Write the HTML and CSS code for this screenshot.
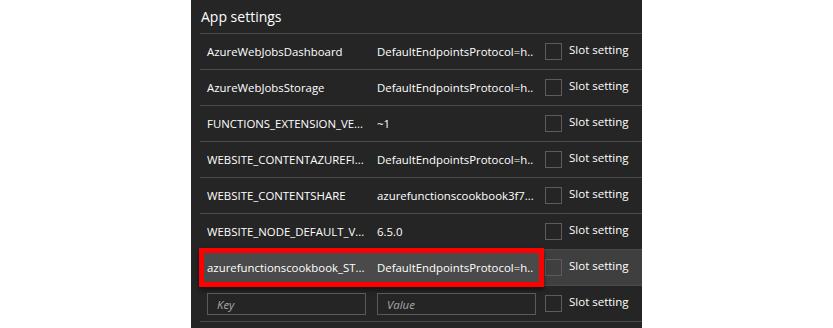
FILE: index.html
```html
<!DOCTYPE html>
<html lang="en">
  <head>
    <meta charset="UTF-8">
    <meta name="viewport" content="width=device-width, initial-scale=1.0">
    <title>App settings</title>
    <link rel="stylesheet" href="styles.css">
  </head>
  <body>
    <div class="panel">
        <p class="title">App settings</p>

        <div class="row">
            <span class="key">AzureWebJobsDashboard</span>
            <span class="value">DefaultEndpointsProtocol=h..</span>
            <span class="check"></span>
            <span class="slot">Slot setting</span>
        </div>
        <div class="row">
            <span class="key">AzureWebJobsStorage</span>
            <span class="value">DefaultEndpointsProtocol=h..</span>
            <span class="check"></span>
            <span class="slot">Slot setting</span>
        </div>
        <div class="row">
            <span class="key">FUNCTIONS_EXTENSION_VE...</span>
            <span class="value">~1</span>
            <span class="check"></span>
            <span class="slot">Slot setting</span>
        </div>
        <div class="row">
            <span class="key">WEBSITE_CONTENTAZUREFI...</span>
            <span class="value">DefaultEndpointsProtocol=h..</span>
            <span class="check"></span>
            <span class="slot">Slot setting</span>
        </div>
        <div class="row">
            <span class="key">WEBSITE_CONTENTSHARE</span>
            <span class="value">azurefunctionscookbook3f7...</span>
            <span class="check"></span>
            <span class="slot">Slot setting</span>
        </div>
        <div class="row">
            <span class="key">WEBSITE_NODE_DEFAULT_V...</span>
            <span class="value">6.5.0</span>
            <span class="check"></span>
            <span class="slot">Slot setting</span>
        </div>
        <div class="row row-selected">
            <div class="highlight"></div>
            <span class="key">azurefunctionscookbook_ST...</span>
            <span class="value">DefaultEndpointsProtocol=h..</span>
            <span class="check"></span>
            <span class="slot">Slot setting</span>
        </div>
        <div class="row">
            <span class="key"><input class="field" placeholder="Key"></span>
            <span class="value"><input class="field" placeholder="Value"></span>
            <span class="check"></span>
            <span class="slot">Slot setting</span>
        </div>
    </div>
  </body>
</html>
```

FILE: styles.css
```css
body{
    margin: 0;
    background-color: white;
    font-family: "Open Sans", "Noto Sans", Arial, sans-serif;
}

.panel{
    margin-left: 191px;
    width: 442px;
    height: 328px;
    padding-left: 9px;
    background-color: #252525;
    color: #ffffff;
    overflow: hidden;
}

.title{
    margin: 0;
    height: 33px;
    padding-left: 1px;
    line-height: 34px;
    font-size: 14px;
    border-bottom: 1px solid #4b4b4b;
}

.row{
    position: relative;
    display: flex;
    align-items: center;
    height: 35px;
    font-size: 11.4px;
    border-bottom: 1px solid #4b4b4b;
}

.row-selected{
    background-color: #3f3f3f;
}

.highlight{
    position: absolute;
    left: -1px;
    top: -2px;
    width: 335px;
    height: 29px;
    border: 5px solid #ff0000;
    background-color: #4a4a4a;
    box-shadow: 0 3px 4px rgba(0, 0, 0, 0.5);
}

.key{
    position: relative;
    width: 170px;
    padding-left: 7px;
    white-space: nowrap;
}

.value{
    position: relative;
    width: 168px;
    white-space: nowrap;
}

.check{
    width: 15px;
    height: 15px;
    border: 1px solid #5c5c5c;
}

.slot{
    margin-left: 7px;
    margin-bottom: 5px;
    font-size: 11.5px;
}

.field{
    box-sizing: border-box;
    width: 159px;
    height: 22px;
    margin-top: 1px;
    padding: 0 0 0 9px;
    background-color: #252525;
    border: 1px solid #5a5a5a;
    color: #f2f2f2;
    font-family: inherit;
    font-size: 11.4px;
    font-style: italic;
}

.field::placeholder{
    color: #a8a8a8;
}
```
